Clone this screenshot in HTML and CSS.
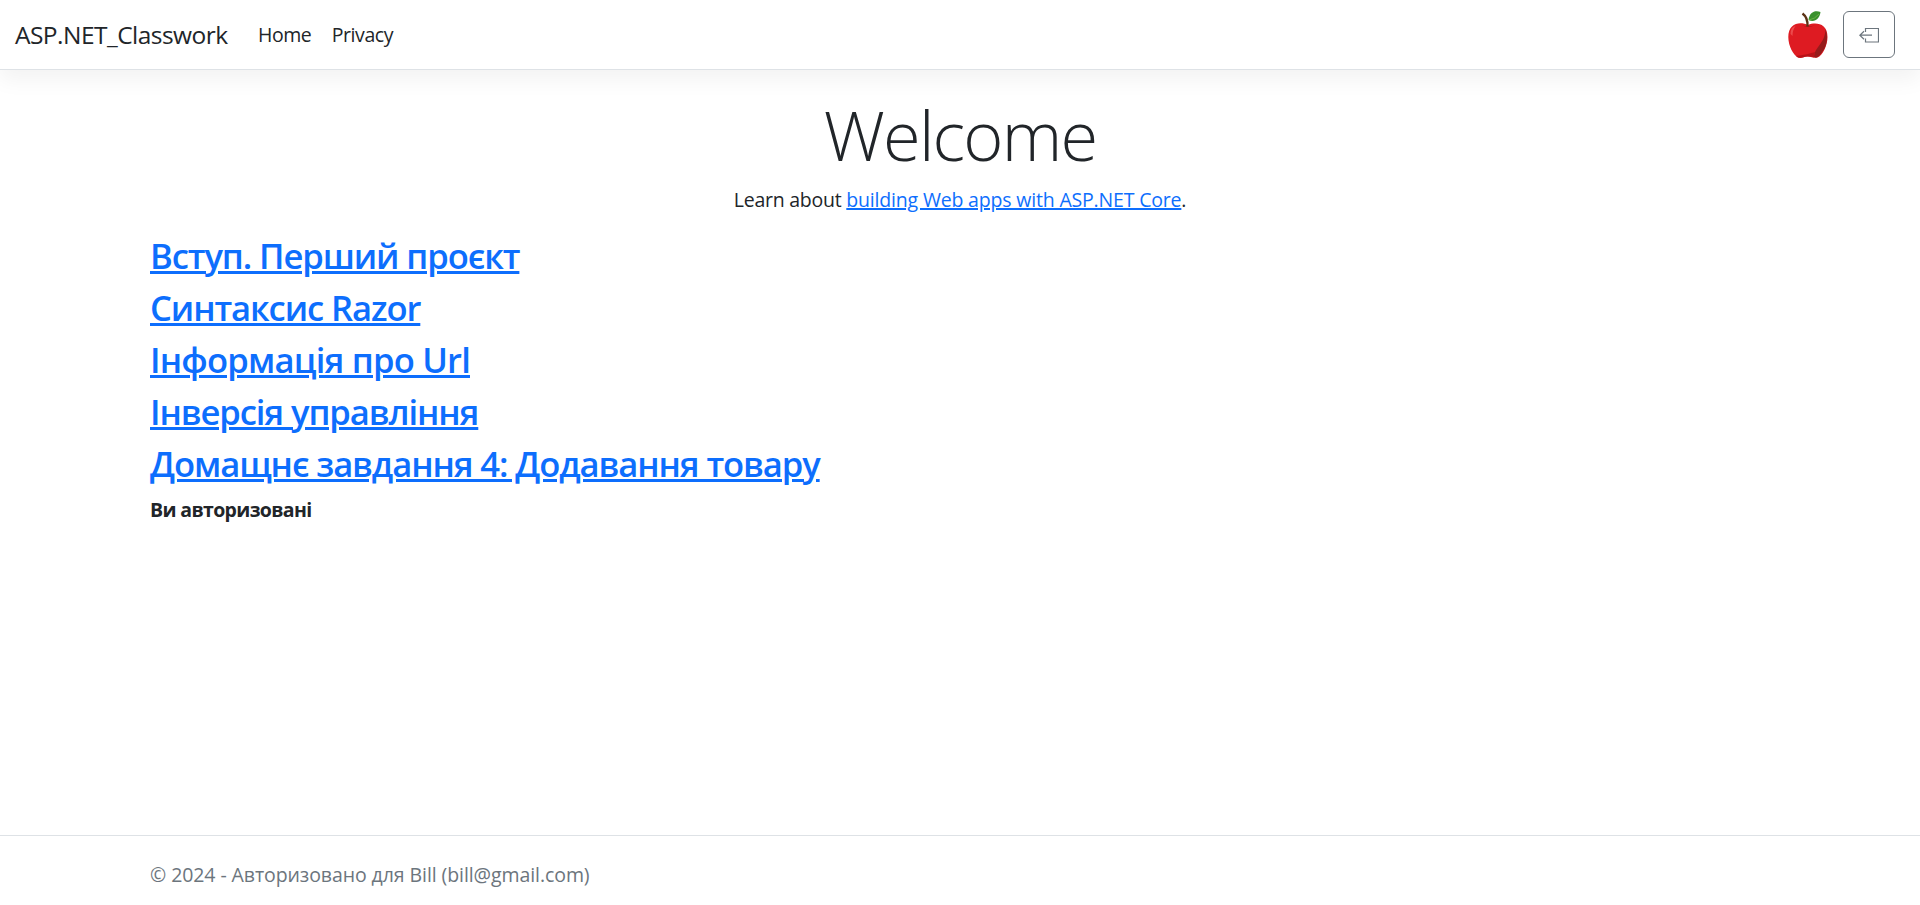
FILE: index.html
```html
<!DOCTYPE html>
<html lang="uk">
<head>
<meta charset="utf-8">
<title>Home Page - ASP.NET_Classwork</title>
<link rel="stylesheet" href="styles.css">
</head>
<body>
<header class="navbar">
  <a class="brand">ASP.NET_Classwork</a>
  <nav class="nav"><a>Home</a><a>Privacy</a></nav>
  <div class="tools">
    <svg class="apple" viewBox="0 0 40 48">
      <path fill="#de1b22" d="M20 14C12 10 .3 12 .3 26c0 9 5 18 9.7 20.500 4 1.500 5-1 9.500-1s6 2 10 1c5-2 10-12 10-20.500 0-14-12-15-19.500-12z"/>
      <path fill="#961b1b" d="M37.500 18c2 5 3 16-4 24-4 5-5 5-7.500 4 1-11 11-13 11.500-28z"/>
      <path fill="#b81218" d="M26 46.400c-3-1-4-1-7-1s-5 2-9 1l-2-1.400c8-1 12-2 19-4z"/>
      <path fill="#ec4a4c" d="M2.500 23q0-7 5-8-3 4-3 10z"/>
      <path fill="#8c1018" d="M14 14q6 3 13 0-7 4-13 0z"/>
      <path d="M14.500 2.500q5.500 4 5 13" fill="none" stroke="#5b3215" stroke-width="2.400"/>
      <path fill="#39912c" d="M20.500 9C21.500 1 27-1 32.500 1c-1 7-6 11-12 8z"/>
      <path d="M21 9q6-1 10-6" fill="none" stroke="#75b947" stroke-width=".8"/>
    </svg>
    <button class="logout" aria-label="Logout"><svg viewBox="0 0 20 21" width="20" height="21" fill="none" stroke="currentColor" stroke-width="1.2"><path d="M6.500 8V4.500h13v13.500h-13V14.500M.8 11.200H13M5 7.200l-4.200 4 4.200 4"/></svg></button>
  </div>
</header>
<main class="container">
  <h1>Welcome</h1>
  <p class="learn">Learn about <a class="link">building Web apps with ASP.NET Core</a>.</p>
  <h2><a class="link">Вступ. Перший проєкт</a></h2>
  <h2><a class="link">Синтаксис Razor</a></h2>
  <h2><a class="link topic-url">Інформація про Url</a></h2>
  <h2><a class="link">Інверсія управління</a></h2>
  <h2><a class="link">Домащнє завдання 4: Додавання товару</a></h2>
  <b>Ви авторизовані</b>
</main>
<footer><div class="container">© 2024 - Авторизовано для Bill (bill@gmail.com)</div></footer>
</body>
</html>
```
FILE: styles.css
```css
*{box-sizing:border-box}
body{margin:0;height:905px;display:flex;flex-direction:column;font:19.5px/30px "Open Sans","Noto Sans",sans-serif;color:#212529;background:#fff}
.navbar{height:70px;display:flex;align-items:center;padding:0 25px 0 15px;border-bottom:1px solid #dee2e6;box-shadow:0 10px 20px rgba(0,0,0,.05)}
.brand{font-size:24.5px;letter-spacing:-.53px;width:243px}
.nav{display:flex;gap:20.5px;letter-spacing:-.45px}
.tools{margin-left:auto;display:flex;align-items:center;gap:15px}
.apple{width:40px;height:48px}
.logout{width:52px;height:47px;border:1px solid #6c757d;border-radius:6px;background:#fff;color:#6c757d;padding:0;display:grid;place-items:center}
.container{width:1620px;margin:0 auto}
main.container{flex:1;padding-top:23px}
h1{font-size:68.5px;line-height:84px;font-weight:300;letter-spacing:-1.8px;text-align:center;margin:0 0 8px}
.learn{text-align:center;letter-spacing:-.24px;margin:0 0 20px}
.link{color:#0d6efd;text-decoration:underline}
.learn .link{text-decoration-thickness:2px;letter-spacing:-.18px}
h2{font-size:34.6px;line-height:42px;font-weight:540;letter-spacing:-1.09px;margin:0 0 10px}
h2 .link{text-decoration-thickness:3px}
.topic-url{letter-spacing:-.8px}
b{display:block;letter-spacing:-.65px}
footer{height:70px;border-top:1px solid #dee2e6;color:#6c757d;line-height:78px;letter-spacing:-.08px}
```
